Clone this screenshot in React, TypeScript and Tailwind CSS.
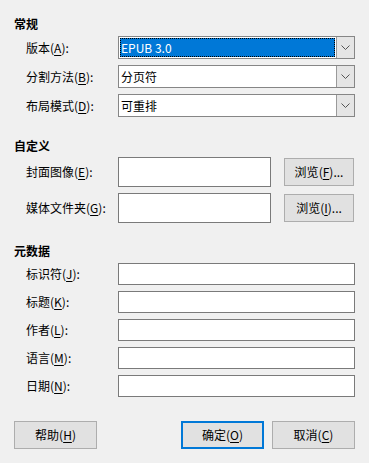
import React from "react";

const font = { fontFamily: '"Noto Sans CJK SC", "Noto Sans", sans-serif' };

const Key = ({ k }: { k: string }) => (
  <>
    (<span className="underline underline-offset-2">{k}</span>)
  </>
);

const Label = ({ text, k }: { text: string; k: string }) => (
  <div className="w-[104px] shrink-0 pl-3 text-[12px] leading-4 text-black whitespace-nowrap">
    {text}
    <Key k={k} />:
  </div>
);

const Chevron = () => (
  <svg width="9" height="5" viewBox="0 0 9 5" fill="none">
    <path d="M0.5 0.5 L4.5 4.5 L8.5 0.5" stroke="#555" strokeWidth="1" />
  </svg>
);

const Combo = ({ value, active }: { value: string; active?: boolean }) => (
  <div className="flex h-[23px] w-[237px] border border-[#868686] bg-white">
    <div className="flex-1 p-px">
      <div
        className={
          active
            ? "h-full bg-[#0078d7] text-white outline outline-1 outline-dotted outline-black -outline-offset-1 pl-px text-[12px] leading-[19px]"
            : "h-full pl-px text-[12px] leading-[19px] text-black"
        }
      >
        {value}
      </div>
    </div>
    <div className="flex w-[18px] items-center justify-center border-l border-[#9a9a9a] bg-[#e5e5e5]">
      <Chevron />
    </div>
  </div>
);

const Btn = ({
  text,
  k,
  tail = "",
  primary,
  className = "",
}: {
  text: string;
  k: string;
  tail?: string;
  primary?: boolean;
  className?: string;
}) => (
  <div
    className={
      "flex items-center justify-center bg-[#e1e1e1] text-[12px] text-black " +
      (primary ? "border-2 border-[#0078d7] " : "border border-[#adadad] ") +
      className
    }
  >
    {text}
    <Key k={k} />
    {tail}
  </div>
);

export default function App() {
  return (
    <div className="h-[463px] w-[369px] bg-[#f0f0f0] px-[14px] pt-4 text-black" style={font}>
      <div className="text-[12px] font-bold leading-4">常规</div>
      <div className="mt-1 flex flex-col gap-[6px]">
        <div className="flex items-center">
          <Label text="版本" k="A" />
          <Combo value="EPUB 3.0" active />
        </div>
        <div className="flex items-center">
          <Label text="分割方法" k="B" />
          <Combo value="分页符" />
        </div>
        <div className="flex items-center">
          <Label text="布局模式" k="D" />
          <Combo value="可重排" />
        </div>
      </div>

      <div className="mt-[21px] text-[12px] font-bold leading-4">自定义</div>
      <div className="mt-[3px] flex flex-col gap-[6px]">
        <div className="flex items-center">
          <Label text="封面图像" k="E" />
          <div className="h-[30px] w-[153px] border border-[#7a7a7a] bg-white" />
          <Btn text="浏览" k="F" tail="..." className="ml-[13px] h-[28px] w-[70px]" />
        </div>
        <div className="flex items-center">
          <Label text="媒体文件夹" k="G" />
          <div className="h-[30px] w-[153px] border border-[#7a7a7a] bg-white" />
          <Btn text="浏览" k="I" tail="..." className="ml-[13px] h-[28px] w-[70px]" />
        </div>
      </div>

      <div className="mt-5 text-[12px] font-bold leading-4">元数据</div>
      <div className="mt-1 flex flex-col gap-[6px]">
        {[
          ["标识符", "J"],
          ["标题", "K"],
          ["作者", "L"],
          ["语言", "M"],
          ["日期", "N"],
        ].map(([t, k]) => (
          <div key={k} className="flex items-center">
            <Label text={t} k={k} />
            <div className="h-[22px] w-[237px] border border-[#7a7a7a] bg-white" />
          </div>
        ))}
      </div>

      <div className="mt-6 flex items-center">
        <Btn text="帮助" k="H" className="h-[28px] w-[83px]" />
        <div className="flex-1" />
        <Btn text="确定" k="O" primary className="h-[28px] w-[83px]" />
        <Btn text="取消" k="C" className="ml-2 h-[28px] w-[83px]" />
      </div>
    </div>
  );
}
